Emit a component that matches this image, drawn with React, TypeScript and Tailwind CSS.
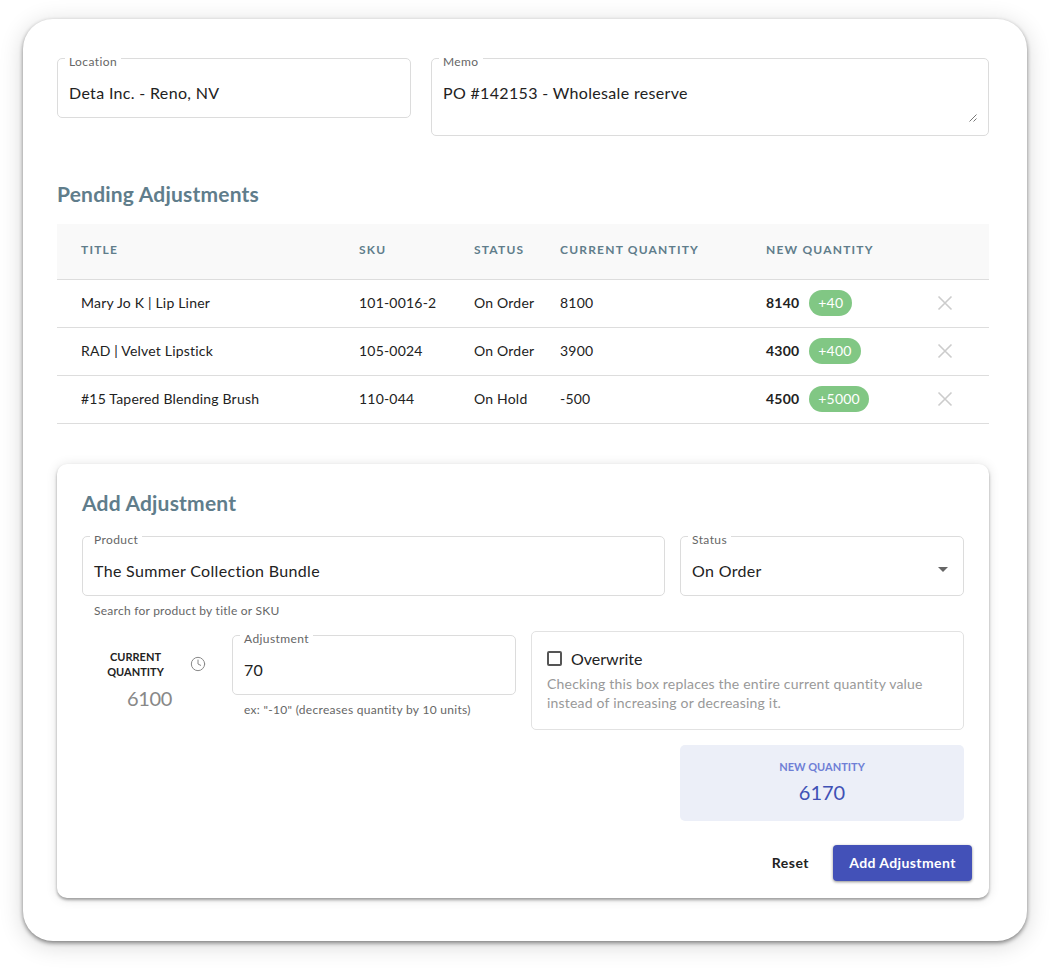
import { Clock } from "lucide-react";

const rows = [
  { title: "Mary Jo K | Lip Liner", sku: "101-0016-2", status: "On Order", current: "8100", next: "8140", diff: "+40" },
  { title: "RAD | Velvet Lipstick", sku: "105-0024", status: "On Order", current: "3900", next: "4300", diff: "+400" },
  { title: "#15 Tapered Blending Brush", sku: "110-044", status: "On Hold", current: "-500", next: "4500", diff: "+5000" },
];

function Field({
  label,
  value,
  className,
  children,
}: {
  label: string;
  value: string;
  className: string;
  children?: React.ReactNode;
}) {
  return (
    <div className={`relative rounded-[5px] border border-[#dcdcdc] bg-white px-[11px] pt-[24px] ${className}`}>
      <span className="absolute left-[7px] top-[-4px] bg-white px-[4px] text-[12px] leading-[14px] tracking-[0.4px] text-[#666666]">
        {label}
      </span>
      <div className="text-[16px] leading-[20px] tracking-[0.33px] text-[#222222]">{value}</div>
      {children}
    </div>
  );
}

function HeadCell({ children }: { children?: React.ReactNode }) {
  return (
    <th className="pl-[24px] pb-[2px] text-left text-[12px] font-bold tracking-[1.2px] text-[#607d8b]">{children}</th>
  );
}

export default function App() {
  return (
    <div className="h-[968px] w-[1050px] overflow-hidden bg-white px-[23px] pt-[19px] font-['Lato','Noto_Sans',sans-serif]">
      <div className="h-[922px] rounded-[30px] bg-white px-[34px] pt-[39px] shadow-[0_2px_4px_rgba(0,0,0,0.45),0_4px_24px_rgba(0,0,0,0.16)]">
        <div className="flex items-start gap-[20px]">
          <Field label="Location" value="Deta Inc. - Reno, NV" className="h-[60px] w-[354px]" />
          <Field label="Memo" value="PO #142153 - Wholesale reserve" className="h-[78px] w-[558px]">
            <svg className="absolute bottom-[13px] right-[11px]" width="8" height="8" viewBox="0 0 8 8">
              <path d="M0.5 7.5L7.5 0.5M4.5 7.5L7.5 4.5" stroke="#555555" strokeWidth="0.8" />
            </svg>
          </Field>
        </div>

        <h2 className="mt-[45px] text-[21px] font-bold leading-[26px] tracking-[0.2px] text-[#607d8b]">Pending Adjustments</h2>

        <table className="mt-[17px] w-[932px] table-fixed border-collapse">
          <colgroup>
            <col className="w-[278px]" />
            <col className="w-[115px]" />
            <col className="w-[86px]" />
            <col className="w-[206px]" />
            <col className="w-[179px]" />
            <col className="w-[68px]" />
          </colgroup>
          <thead>
            <tr className="h-[55px] border-b border-[#dddddd] bg-[#f9f9f9]">
              <HeadCell>TITLE</HeadCell>
              <HeadCell>SKU</HeadCell>
              <HeadCell>STATUS</HeadCell>
              <HeadCell>CURRENT QUANTITY</HeadCell>
              <HeadCell>NEW QUANTITY</HeadCell>
              <HeadCell />
            </tr>
          </thead>
          <tbody className="text-[14px] tracking-[0.2px] text-[#222222]">
            {rows.map((row) => (
              <tr key={row.sku} className="h-[48px] border-b border-[#dddddd]">
                <td className="pl-[24px] pb-[1px]">{row.title}</td>
                <td className="pl-[24px] pb-[1px]">{row.sku}</td>
                <td className="pl-[24px] pb-[1px]">{row.status}</td>
                <td className="pl-[24px] pb-[1px]">{row.current}</td>
                <td className="pl-[24px] pb-[1px]">
                  <div className="flex items-center gap-[10px]">
                    <span className="font-bold">{row.next}</span>
                    <span className="flex h-[26px] items-center rounded-full bg-[#81c784] px-[9px] text-white">
                      {row.diff}
                    </span>
                  </div>
                </td>
                <td className="pl-[16px] pb-[1px]">
                  <svg width="16" height="16" viewBox="0 0 16 16" fill="none" stroke="#cccccc" strokeWidth="1.6">
                    <path d="M1.5 1.5L14.5 14.5M14.5 1.5L1.5 14.5" />
                  </svg>
                </td>
              </tr>
            ))}
          </tbody>
        </table>

        <div className="mt-[40px] h-[434px] w-[932px] rounded-[10px] bg-white pl-[25px] pr-[17px] pt-[26px] shadow-[0_2px_3px_rgba(0,0,0,0.35),0_1px_12px_rgba(0,0,0,0.12)]">
          <h2 className="text-[21px] font-bold leading-[26px] tracking-[0.2px] text-[#607d8b]">Add Adjustment</h2>

          <div className="mt-[20px] flex w-[882px] gap-[15px]">
            <Field label="Product" value="The Summer Collection Bundle" className="h-[60px] w-[583px]" />
            <Field label="Status" value="On Order" className="h-[60px] w-[284px]">
              <svg className="absolute right-[8px] top-[20px]" width="24" height="24" viewBox="0 0 24 24" fill="#666666">
                <path d="M7 10l5 5 5-5z" />
              </svg>
            </Field>
          </div>
          <p className="mt-[8px] pl-[12px] text-[12px] leading-[14px] tracking-[0.25px] text-[#666666]">Search for product by title or SKU</p>

          <div className="mt-[13px] flex w-[882px] items-start gap-[15px]">
            <div className="w-[135px] pt-[18px]">
              <div className="flex items-center">
                <div className="w-[107px] text-center text-[11px] font-bold leading-[15px] text-[#222222]">
                  CURRENT
                  <br />
                  QUANTITY
                </div>
                <Clock className="ml-[1px] text-[#888888]" size={16} strokeWidth={1.5} />
              </div>
              <div className="mt-[6px] text-center text-[20px] leading-[26px] tracking-[-0.3px] text-[#888888]">6100</div>
            </div>
            <div className="mt-[4px] w-[284px]">
              <Field label="Adjustment" value="70" className="h-[60px]" />
              <p className="mt-[8px] pl-[12px] text-[12px] leading-[14px] tracking-[0.3px] text-[#666666]">
                ex: "-10" (decreases quantity by 10 units)
              </p>
            </div>
            <div className="h-[99px] w-[433px] rounded-[5px] border border-[#e2e2e2] px-[15px] pt-[17px]">
              <div className="flex items-center gap-[9px]">
                <span className="h-[15px] w-[15px] rounded-[2px] border-2 border-[#555555]" />
                <span className="text-[16px] leading-[20px] text-[#222222]">Overwrite</span>
              </div>
              <p className="mt-[5px] text-[14px] leading-[19px] tracking-[0.2px] text-[#999999]">
                Checking this box replaces the entire current quantity value
                <br />
                instead of increasing or decreasing it.
              </p>
            </div>
          </div>

          <div className="ml-[598px] mt-[15px] flex h-[76px] w-[284px] flex-col items-center rounded-[5px] bg-[#eceff8] pt-[14px]">
            <span className="text-[11px] font-bold leading-[16px] text-[#6f7fd6]">NEW QUANTITY</span>
            <span className="mt-[4px] text-[20px] leading-[26px] text-[#3f51b5]">6170</span>
          </div>

          <div className="mt-[24px] flex items-center justify-end gap-[24px]">
            <span className="text-[14px] font-bold tracking-[0.5px] text-[#222222]">Reset</span>
            <button
              type="button"
              className="h-[36px] w-[139px] rounded-[4px] bg-[#4351b8] text-[14px] font-bold tracking-[0.4px] text-white shadow-[0_1px_3px_rgba(0,0,0,0.45)]"
            >
              Add Adjustment
            </button>
          </div>
        </div>
      </div>
    </div>
  );
}
